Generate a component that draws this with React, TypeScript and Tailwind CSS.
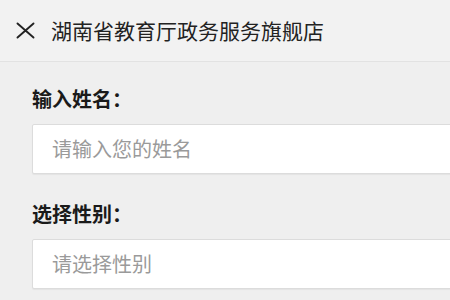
const cjk = "font-['Noto_Sans_CJK_SC','Noto_Sans',sans-serif]";

function CloseIcon() {
	return (
		<svg width="19" height="17" viewBox="0 0 19 17" fill="none" className="shrink-0">
			<path d="M1.5 1.5 L17.5 15.5 M17.5 1.5 L1.5 15.5" stroke="#222" strokeWidth="1.9" strokeLinecap="round" />
		</svg>
	);
}

function Field({ label, placeholder }: { label: string; placeholder: string }) {
	return (
		<div>
			<div className="h-[30px] text-[20px] leading-[30px] font-bold text-[#1a1a1a]">
				{label}
			</div>
			<div className="mt-[10px] -mr-[20px] flex h-[50px] items-center rounded-[2px] border border-[#dcdcdc] bg-white pl-[19px] shadow-[0_1px_1px_rgba(0,0,0,0.05)]">
				<span className="text-[20px] text-[#9a9a9a]">{placeholder}</span>
			</div>
		</div>
	);
}

export default function App() {
	return (
		<div className={`h-[300px] w-[450px] overflow-hidden bg-[#efefef] ${cjk}`}>
			{/* Header */}
			<div className="flex h-[62px] items-center border-b border-[#e2e2e2] bg-[#f2f2f2] pl-[16px]">
				<CloseIcon />
				<span className="ml-[16px] text-[21px] leading-none text-[#222]">
					湖南省教育厅政务服务旗舰店
				</span>
			</div>

			{/* Form */}
			<div className="flex flex-col gap-[25px] pl-[32px] pt-[22px]">
				<Field label="输入姓名：" placeholder="请输入您的姓名" />
				<Field label="选择性别：" placeholder="请选择性别" />
			</div>
		</div>
	);
}
